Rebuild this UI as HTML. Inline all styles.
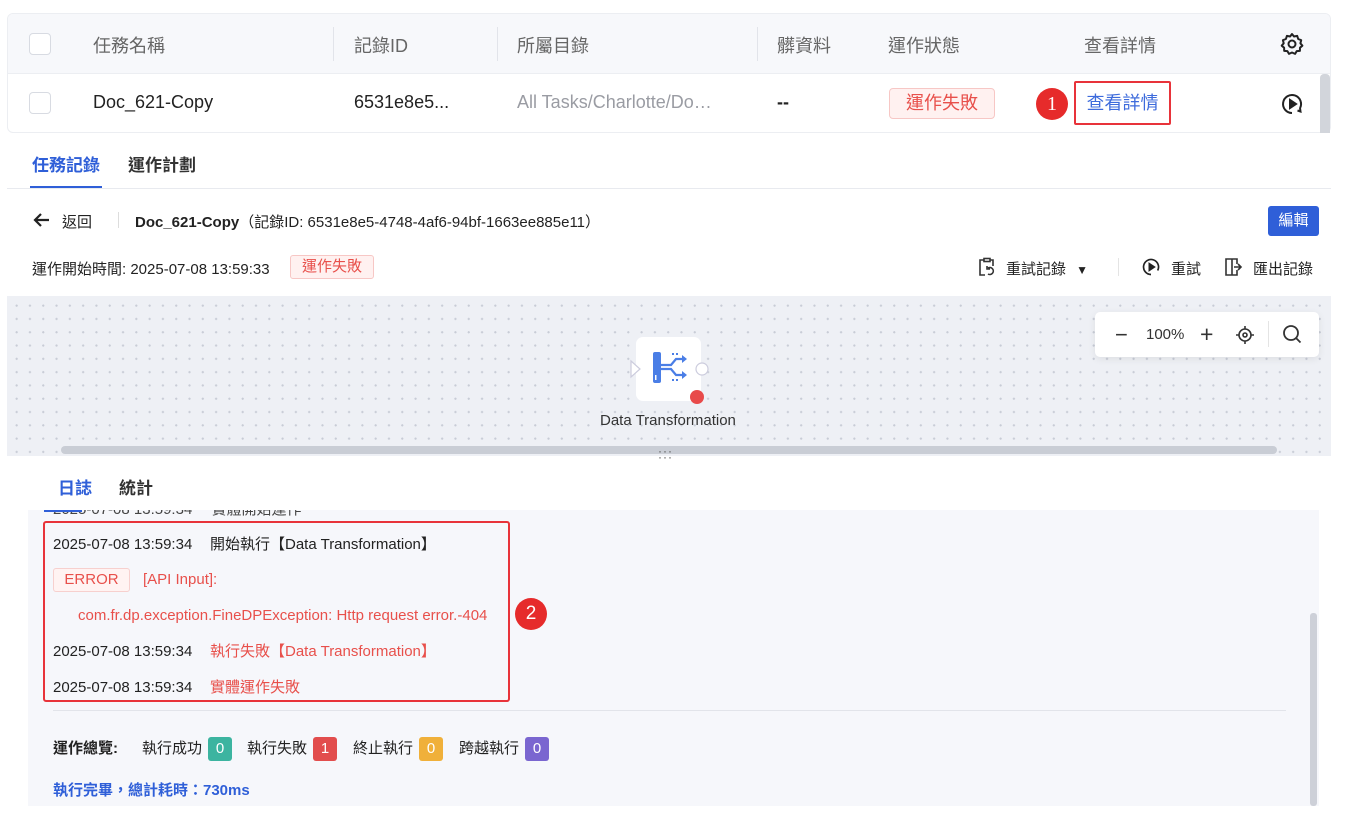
<!DOCTYPE html>
<html><head><meta charset="utf-8"><style>
*{box-sizing:border-box;margin:0;padding:0}
body{width:1345px;height:828px;background:#fff;position:relative;overflow:hidden;font-family:"Liberation Sans","Noto Sans CJK TC",sans-serif;color:#222}
.a{position:absolute;white-space:nowrap}
.cb{position:absolute;width:22px;height:22px;border:1px solid #d8dbe2;border-radius:4px;background:#fff}
.h{font-size:18px;color:#666;top:32px}
.r{font-size:18px;top:92px;color:#222}
.sep{position:absolute;width:1px;height:34px;top:27px;background:#e2e4ea}
.dot{background-image:radial-gradient(circle,#c8ccd6 1px,transparent 1.2px);background-size:13.3px 13.3px;background-position:3px 3px}
.ts{font-size:15px;color:#222;line-height:20px}
.red{color:#e8504b}
.bdg{position:absolute;width:24px;height:24px;border-radius:3px;color:#fff;text-align:center;line-height:24px;font-size:15px;top:737px}
</style></head><body>
<div class="a" style="left:7px;top:13px;width:1324px;height:120px;border:1px solid #eceef2;border-radius:6px;overflow:hidden">
 <div class="a" style="left:0;top:0;width:1324px;height:60px;background:#f7f8fb;border-bottom:1px solid #eceef2"></div>
</div>
<div class="a" style="left:1320px;top:74px;width:10px;height:59px;background:#d2d5db;border-radius:4px 4px 0 0"></div>
<div class="cb" style="left:29px;top:33px"></div>
<div class="cb" style="left:29px;top:92px"></div>
<div class="sep" style="left:333px"></div><div class="sep" style="left:497px"></div><div class="sep" style="left:757px"></div>
<div class="a h" style="left:93px">任務名稱</div>
<div class="a h" style="left:354px">記錄ID</div>
<div class="a h" style="left:517px">所屬目錄</div>
<div class="a h" style="left:777px">髒資料</div>
<div class="a h" style="left:888px">運作狀態</div>
<div class="a h" style="left:1084px">查看詳情</div>
<svg class="a" style="left:1280px;top:32px" width="24" height="24" viewBox="0 0 24 24" fill="none" stroke="#222" stroke-width="2"><path d="M12 2l2 2.5 3.2-.6 1 3.1 3 1.2-.8 3.1 2 2.4-2.4 2-.1 3.2-3.2.2-1.6 2.8L12 20.5l-3 1.4-1.6-2.8-3.2-.2-.1-3.2L1.7 13.7l2-2.4-.8-3.1 3-1.2 1-3.1 3.2.6z" stroke-linejoin="round"/><circle cx="12" cy="12" r="3.5"/></svg>
<div class="a r" style="left:93px">Doc_621-Copy</div>
<div class="a r" style="left:354px">6531e8e5...</div>
<div class="a r" style="left:517px;color:#9a9ca3">All Tasks/Charlotte/Do…</div>
<div class="a r" style="left:777px;font-weight:bold">--</div>
<div class="a" style="left:889px;top:88px;width:106px;height:31px;border:1px solid #f7c7c5;background:#fff1f0;border-radius:4px;color:#e8504b;font-size:18px;text-align:center;line-height:29px">運作失敗</div>
<div class="a" style="left:1036px;top:88px;width:32px;height:32px;border-radius:50%;background:#e62b2b;color:#fff;font-family:'Liberation Serif',serif;font-size:20px;text-align:center;line-height:32px">1</div>
<div class="a" style="left:1074px;top:81px;width:97px;height:44px;border:2px solid #e8333a;border-radius:2px;color:#3d6bdc;font-size:18px;text-align:center;line-height:40px">查看詳情</div>
<svg class="a" style="left:1280px;top:92px" width="24" height="24" viewBox="0 0 24 24" fill="none" stroke="#222" stroke-width="2"><path d="M12 21a9 9 0 1 1 8-4.8"/><path d="M20 16l.5 3.5-3-1" /><path d="M10 8l6 4-6 4z" fill="#222"/></svg>
<div class="a" style="left:7px;top:138px;width:1324px;height:660px;background:#fff"></div>
<div class="a" style="left:32px;top:151px;font-size:17px;font-weight:bold;color:#2f5fd8">任務記錄</div>
<div class="a" style="left:128px;top:151px;font-size:17px;font-weight:bold;color:#333">運作計劃</div>
<div class="a" style="left:30px;top:186px;width:72px;height:3px;background:#2f5fd8"></div>
<div class="a" style="left:7px;top:188px;width:1324px;height:1px;background:#e8eaef"></div>
<svg class="a" style="left:33px;top:212px" width="18" height="16" viewBox="0 0 18 16" fill="none" stroke="#222" stroke-width="2.2"><path d="M16 8H3M8 2L2 8l6 6"/></svg>
<div class="a" style="left:62px;top:211px;font-size:15px">返回</div>
<div class="a" style="left:118px;top:212px;width:1px;height:16px;background:#ddd"></div>
<div class="a" style="left:135px;top:211px;font-size:15px"><b>Doc_621-Copy</b>（記錄ID: 6531e8e5-4748-4af6-94bf-1663ee885e11）</div>
<div class="a" style="left:1268px;top:206px;width:51px;height:30px;background:#2f5fd8;border-radius:3px;color:#fff;font-size:15px;text-align:center;line-height:30px">編輯</div>
<div class="a" style="left:32px;top:258px;font-size:15px">運作開始時間: 2025-07-08 13:59:33</div>
<div class="a" style="left:290px;top:255px;width:84px;height:24px;border:1px solid #f7c7c5;background:#fff1f0;border-radius:3px;color:#e8504b;font-size:15px;text-align:center;line-height:22px">運作失敗</div>
<svg class="a" style="left:977px;top:257px" width="20" height="20" viewBox="0 0 20 20" fill="none" stroke="#333" stroke-width="1.6"><path d="M7 3H3v15h5M13 3h3v6"/><rect x="7" y="1.5" width="6" height="3"/><path d="M11 11a3.5 3.5 0 1 1 0 6M10 9v3h3"/></svg>
<div class="a" style="left:1006px;top:258px;font-size:15px">重試記錄 <span style="font-size:12px;margin-left:6px">▼</span></div>
<div class="a" style="left:1118px;top:258px;width:1px;height:18px;background:#e4e4e4"></div>
<svg class="a" style="left:1141px;top:257px" width="20" height="20" viewBox="0 0 24 24" fill="none" stroke="#222" stroke-width="2"><path d="M12 21a9 9 0 1 1 8-4.8"/><path d="M10 8l6 4-6 4z" fill="#222"/></svg>
<div class="a" style="left:1171px;top:258px;font-size:15px">重試</div>
<svg class="a" style="left:1223px;top:257px" width="20" height="20" viewBox="0 0 20 20" fill="none" stroke="#333" stroke-width="1.6"><path d="M9 2H3v16h6V2M9 2h5v5M14 13v5H9M11 10h7M15 7l3 3-3 3"/></svg>
<div class="a" style="left:1253px;top:258px;font-size:15px">匯出記錄</div>
<div class="a dot" style="left:7px;top:296px;width:1324px;height:160px;background-color:#eef0f5"></div>
<div class="a" style="left:61px;top:446px;width:1216px;height:8px;background:#c9cdd5;border-radius:4px"></div>
<div class="a" style="left:658px;top:448px;font-size:12px;line-height:6px;color:#555;letter-spacing:1px">···<br>···</div>
<div class="a" style="left:1095px;top:312px;width:224px;height:45px;background:#fff;border-radius:5px;box-shadow:0 2px 8px rgba(0,0,0,.08)"></div>
<div class="a" style="left:1115px;top:322px;font-size:22px;color:#333">−</div>
<div class="a" style="left:1146px;top:326px;font-size:15px;color:#333">100%</div>
<div class="a" style="left:1200px;top:321px;font-size:23px;color:#333">+</div>
<svg class="a" style="left:1235px;top:325px" width="20" height="20" viewBox="0 0 20 20" fill="none" stroke="#333" stroke-width="1.6"><circle cx="10" cy="10" r="6"/><circle cx="10" cy="10" r="2"/><path d="M10 1v3M10 16v3M1 10h3M16 10h3"/></svg>
<div class="a" style="left:1268px;top:321px;width:1px;height:26px;background:#e4e4e4"></div>
<svg class="a" style="left:1282px;top:324px" width="20" height="20" viewBox="0 0 20 20" fill="none" stroke="#333" stroke-width="1.8"><circle cx="9" cy="9" r="7"/><path d="M14 14l4.5 4.5"/></svg>
<div class="a" style="left:636px;top:337px;width:65px;height:64px;background:#fff;border-radius:7px"></div>
<svg class="a" style="left:628px;top:348px" width="84" height="60" viewBox="0 0 84 60"><path d="M3 13l9 8-9 8z" fill="#fff" stroke="#ccd" stroke-width="1.2"/><circle cx="74" cy="21" r="6" fill="#fff" stroke="#ccd" stroke-width="1.2"/><rect x="25" y="4" width="8" height="31" rx="2" fill="#4a7ee6"/><rect x="27" y="27" width="1.5" height="5" fill="#fff"/><path d="M33 17h10l5-6h8M33 21h10l5 6h8" fill="none" stroke="#4a7ee6" stroke-width="2.2"/><path d="M54 7l5 4-5 4zM54 23l5 4-5 4z" fill="#4a7ee6"/><path d="M44 6h2M48 6h2M44 32h2M48 32h2" stroke="#4a7ee6" stroke-width="2"/><circle cx="69" cy="49" r="7" fill="#e84a4a"/></svg>
<div class="a" style="left:600px;top:412px;font-size:15px;color:#333">Data Transformation</div>
<div class="a" style="left:58px;top:474px;font-size:17px;font-weight:bold;color:#2f5fd8">日誌</div>
<div class="a" style="left:119px;top:474px;font-size:17px;font-weight:bold;color:#333">統計</div>
<div class="a" style="left:28px;top:510px;width:1291px;height:296px;background:#f6f7fb;overflow:hidden">
 <div class="a ts" style="left:25px;top:-10px;color:#444">2025-07-08 13:59:34　 實體開始運作</div>
</div>
<div class="a" style="left:44px;top:510px;width:38px;height:2px;background:#2f5fd8"></div>
<div class="a" style="left:1310px;top:613px;width:7px;height:193px;background:#cdd0d8;border-radius:3px"></div>
<div class="a" style="left:43px;top:521px;width:467px;height:181px;border:2px solid #e8333a;border-radius:3px"></div>
<div class="a ts" style="left:53px;top:535px">2025-07-08 13:59:34</div><div class="a ts" style="left:210px;top:535px">開始執行【Data Transformation】</div>
<div class="a" style="left:53px;top:568px;width:77px;height:24px;border:1px solid #f7d0ce;background:#fff3f2;border-radius:3px;color:#e8504b;font-size:15px;text-align:center;line-height:22px">ERROR</div>
<div class="a ts red" style="left:143px;top:570px">[API Input]:</div>
<div class="a ts red" style="left:78px;top:606px">com.fr.dp.exception.FineDPException: Http request error.-404</div>
<div class="a ts" style="left:53px;top:642px">2025-07-08 13:59:34</div><div class="a ts red" style="left:210px;top:642px">執行失敗【Data Transformation】</div>
<div class="a ts" style="left:53px;top:678px">2025-07-08 13:59:34</div><div class="a ts red" style="left:210px;top:678px">實體運作失敗</div>
<div class="a" style="left:515px;top:598px;width:32px;height:32px;border-radius:50%;background:#e62b2b;color:#fff;font-size:19px;text-align:center;line-height:32px">2</div>
<div class="a" style="left:53px;top:710px;width:1233px;height:1px;background:#e2e4ea"></div>
<div class="a ts" style="left:53px;top:739px;font-weight:bold">運作總覽:</div>
<div class="a ts" style="left:142px;top:739px">執行成功</div><div class="bdg" style="left:208px;background:#3cb4a0">0</div>
<div class="a ts" style="left:247px;top:739px">執行失敗</div><div class="bdg" style="left:313px;background:#e24d4d">1</div>
<div class="a ts" style="left:353px;top:739px">終止執行</div><div class="bdg" style="left:419px;background:#f0b03a">0</div>
<div class="a ts" style="left:459px;top:739px">跨越執行</div><div class="bdg" style="left:525px;background:#7a66d0">0</div>
<div class="a" style="left:53px;top:779px;font-size:15px;font-weight:bold;color:#2f5fd8">執行完畢，總計耗時：730ms</div>
</body></html>
